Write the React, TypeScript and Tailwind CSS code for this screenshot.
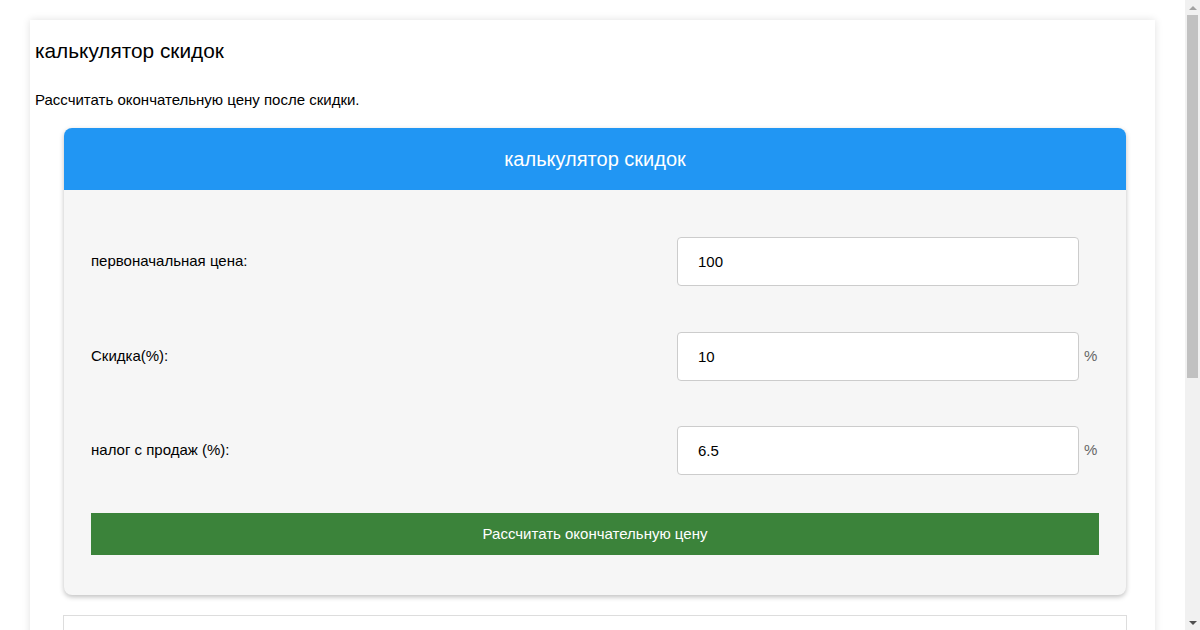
import React from 'react';

const rows = [
  { label: 'первоначальная цена:', value: '100', unit: '', gap: '' },
  { label: 'Скидка(%):', value: '10', unit: '%', gap: 'mt-[46px]' },
  { label: 'налог с продаж (%):', value: '6.5', unit: '%', gap: 'mt-[45px]' },
];

// imitation of the page scrollbar seen in the screenshot
function FakeScrollbar() {
  return (
    <div className="fixed top-0 right-0 flex h-screen w-[15px] flex-col bg-[#f1f1f1]">
      <div className="flex h-[15px] items-center justify-center">
        <svg width="8" height="4" viewBox="0 0 8 4"><path d="M0 4 L4 0 L8 4 Z" fill="#a3a3a3" /></svg>
      </div>
      <div className="mx-[2px] h-[363px] bg-[#c1c1c1]"></div>
      <div className="flex-1"></div>
      <div className="flex h-[15px] items-center justify-center">
        <svg width="8" height="4" viewBox="0 0 8 4"><path d="M0 0 L8 0 L4 4 Z" fill="#505050" /></svg>
      </div>
    </div>
  );
}

export default function App() {
  return (
    <div className="bg-white pt-[20px] pb-[20px] font-['Liberation_Sans',Arial,sans-serif] text-black">
      <div className="ml-[30px] w-[1125px] bg-white px-[5px] pb-[20px] shadow-[0_0_8px_rgba(0,0,0,0.12)]">
        <h1 className="pt-[19px] text-[20.8px] leading-[24px]">калькулятор скидок</h1>
        <p className="mt-[28px] text-[15px] leading-[18px]">Рассчитать окончательную цену после скидки.</p>

        <div className="mt-[19px] ml-[29px] w-[1062px] overflow-hidden rounded-[8px] bg-[#f6f6f6] shadow-[0_2px_5px_rgba(0,0,0,0.25)]">
          <div className="flex h-[62px] items-center justify-center bg-[#2196f3] text-[20px] text-white">
            калькулятор скидок
          </div>
          <div className="px-[27px] pt-[47px] pb-[40px]">
            {rows.map((r) => (
              <div key={r.label} className={`grid grid-cols-[586px_402px_20px] items-center ${r.gap}`}>
                <label className="text-[15px]">{r.label}</label>
                <input
                  type="text"
                  defaultValue={r.value}
                  className="h-[49px] w-[402px] rounded-[4px] border border-[#cccccc] bg-white pl-[20px] text-[15px] outline-none"
                />
                <span className="pl-[5px] text-[15px] text-[#666666]">{r.unit}</span>
              </div>
            ))}
            <button className="mt-[38px] h-[42px] w-[1008px] bg-[#3b833a] text-[15px] text-white">
              Рассчитать окончательную цену
            </button>
          </div>
        </div>

        <div className="mt-[20px] ml-[28px] h-[385px] w-[1064px] border border-[#dddddd] bg-white"></div>
      </div>
      <FakeScrollbar />
    </div>
  );
}
